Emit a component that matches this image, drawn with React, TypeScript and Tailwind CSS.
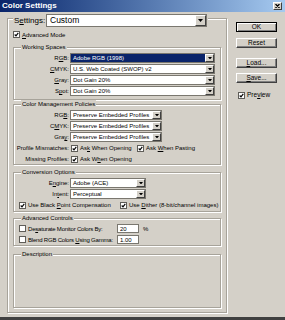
import type { ReactNode } from 'react';

function Arrow({ big }: { big?: boolean }) {
  return (
    <div className={`shrink-0 h-full bg-[#d4d0c8] border border-t-white border-l-white border-r-[#404040] border-b-[#404040] flex items-center justify-center ${big ? 'w-[11px]' : 'w-[9px]'}`}>
      <svg width={big ? 5 : 4} height={big ? 3 : 2.5} viewBox="0 0 5 3">
        <polygon points="0,0 5,0 2.5,3" fill="#000" />
      </svg>
    </div>
  );
}

function Select({ value, className, hi }: { value: string; className: string; hi?: boolean }) {
  return (
    <div className={`flex h-[10px] bg-white border border-[#7a776f] ${className}`}>
      <div className={`flex-1 flex items-center pl-[2px] whitespace-nowrap overflow-hidden ${hi ? 'bg-[#0a246a] text-white' : ''}`}>
        {value}
      </div>
      <Arrow />
    </div>
  );
}

function Box({ checked }: { checked?: boolean }) {
  return (
    <div className="shrink-0 w-[7px] h-[7px] bg-white border border-[#5f5d58] flex items-center justify-center">
      {checked && (
        <svg width="5" height="5" viewBox="0 0 7 7">
          <path d="M1 3.5 L2.8 5.5 L6 1.2" stroke="#000" strokeWidth="1.6" fill="none" />
        </svg>
      )}
    </div>
  );
}

function Check({ checked, children, className = '' }: { checked?: boolean; children: ReactNode; className?: string }) {
  return (
    <div className={`flex items-center gap-[2px] whitespace-nowrap ${className}`}>
      <Box checked={checked} />
      <span>{children}</span>
    </div>
  );
}

function Group({ title, className, children }: { title: string; className: string; children?: ReactNode }) {
  return (
    <div className={`border border-[#a7a39a] shadow-[1px_1px_0_#fff,inset_1px_1px_0_#fff] ${className}`}>
      <div className="-mt-[5px] ml-[7px] px-[1px] w-fit h-[9px] leading-[9px] bg-[#d4d0c8]">{title}</div>
      {children}
    </div>
  );
}

function Row({ label, children }: { label: ReactNode; children: ReactNode }) {
  return (
    <div className="flex items-center h-[10px]">
      <div className="w-[55px] text-right whitespace-nowrap">{label}</div>
      <div className="ml-[1px] flex items-center">{children}</div>
    </div>
  );
}

function Btn({ children, def, className = '' }: { children: ReactNode; def?: boolean; className?: string }) {
  return (
    <div
      className={`h-[10px] flex items-center justify-center text-[6.5px] ${
        def
          ? 'border border-black shadow-[inset_1px_1px_0_#fff,inset_-1px_-1px_0_#808080]'
          : 'border border-t-white border-l-white border-r-[#404040] border-b-[#404040] shadow-[inset_-1px_-1px_0_#808080]'
      } ${className}`}
    >
      {children}
    </div>
  );
}

export default function App() {
  return (
    <div className="w-[285px] h-[320px] bg-[#d4d0c8] flex flex-col overflow-hidden border-b-[3px] border-[#404040] text-[6px] leading-none text-black font-['Liberation_Sans',Arial,sans-serif]">
      <div className="h-[12px] shrink-0 flex items-center justify-between pl-[2px] pr-[3px] bg-linear-to-r from-[#0a246a] to-[#a6caf0]">
        <span className="text-white font-bold text-[8px]">Color Settings</span>
        <div className="w-[9px] h-[8px] bg-[#d4d0c8] border border-t-white border-l-white border-r-[#404040] border-b-[#404040] flex items-center justify-center">
          <svg width="5" height="4" viewBox="0 0 5 4">
            <path d="M0.5 0 L4.5 4 M4.5 0 L0.5 4" stroke="#000" strokeWidth="1.2" />
          </svg>
        </div>
      </div>

      <div className="flex">
        <div className="ml-[7px] mt-[6px] w-[220px] border border-[#a7a39a] shadow-[1px_1px_0_#fff,inset_1px_1px_0_#fff] flex flex-col px-[5px] pb-[4px]">
          <div className="-mt-[5px] w-fit flex items-center gap-[1px] pl-[1px] pr-[1px] bg-[#d4d0c8]">
            <span className="text-[8px] w-[31px]">S<u>e</u>ttings:</span>
            <div className="flex h-[13px] w-[161px] bg-white border border-[#7a776f]">
              <div className="flex-1 flex items-center pl-[3px] text-[8.5px]">Custom</div>
              <Arrow big />
            </div>
          </div>

          <Check checked className="mt-[3px] h-[9px]">
            <u>A</u>dvanced Mode
          </Check>

          <Group title="Working Spaces" className="mt-[8px] pb-[3px] flex flex-col gap-[1px]">
            <Row label={<>R<u>G</u>B:</>}>
              <Select value="Adobe RGB (1998)" className="w-[145px]" hi />
            </Row>
            <Row label={<><u>C</u>MYK:</>}>
              <Select value="U.S. Web Coated (SWOP) v2" className="w-[145px]" />
            </Row>
            <Row label={<><u>G</u>ray:</>}>
              <Select value="Dot Gain 20%" className="w-[145px]" />
            </Row>
            <Row label={<>S<u>p</u>ot:</>}>
              <Select value="Dot Gain 20%" className="w-[145px]" />
            </Row>
          </Group>

          <Group title="Color Management Policies" className="mt-[4px] flex flex-col gap-[1px]">
            <Row label={<>RG<u>B</u>:</>}>
              <Select value="Preserve Embedded Profiles" className="w-[92px]" />
            </Row>
            <Row label={<>C<u>M</u>YK:</>}>
              <Select value="Preserve Embedded Profiles" className="w-[92px]" />
            </Row>
            <Row label={<>Gra<u>y</u>:</>}>
              <Select value="Preserve Embedded Profiles" className="w-[92px]" />
            </Row>
            <Row label="Profile Mismatches:">
              <Check checked className="w-[66px] ml-[1px]">
                As<u>k</u> When Opening
              </Check>
              <Check checked>
                Ask <u>W</u>hen Pasting
              </Check>
            </Row>
            <Row label="Missing Profiles:">
              <Check checked className="ml-[1px]">
                Ask W<u>h</u>en Opening
              </Check>
            </Row>
          </Group>

          <Group title="Conversion Options" className="mt-[7px] pb-[1px] flex flex-col gap-[1px]">
            <Row label={<>E<u>n</u>gine:</>}>
              <Select value="Adobe (ACE)" className="w-[76px]" />
            </Row>
            <Row label={<>In<u>t</u>ent:</>}>
              <Select value="Perceptual" className="w-[76px]" />
            </Row>
            <div className="flex items-center h-[10px] pl-[5px]">
              <Check checked className="w-[101px]">
                Use Black <u>P</u>oint Compensation
              </Check>
              <Check checked>
                Use <u>D</u>ither (8-bit/channel images)
              </Check>
            </div>
          </Group>

          <Group title="Advanced Controls" className="mt-[6px] flex flex-col">
            <div className="flex items-center h-[11px] pl-[5px]">
              <Check className="w-[98px] tracking-[-0.2px]">
                De<u>s</u>aturate Monitor Colors By:
              </Check>
              <div className="w-[22px] h-[9px] bg-white border border-[#7a776f] flex items-center pl-[2px]">20</div>
              <span className="ml-[4px]">%</span>
            </div>
            <div className="flex items-center h-[11px] pl-[5px]">
              <Check className="w-[98px] tracking-[-0.2px]">
                Blend RGB Colors <u>U</u>sing Gamma:
              </Check>
              <div className="w-[22px] h-[9px] bg-white border border-[#7a776f] flex items-center pl-[2px]">1.00</div>
            </div>
          </Group>

          <Group title="Description" className="mt-[8px] h-[54px]" />
        </div>

        <div className="ml-[9px] pt-[10px] w-[41px] flex flex-col">
          <Btn def>OK</Btn>
          <Btn className="mt-[6px]">Reset</Btn>
          <Btn className="mt-[10px]">
            <u>L</u>oad...
          </Btn>
          <Btn className="mt-[5px]">
            <u>S</u>ave...
          </Btn>
          <Check checked className="mt-[9px] ml-[2px] text-[6.5px]">
            Pre<u>v</u>iew
          </Check>
        </div>
      </div>
    </div>
  );
}
